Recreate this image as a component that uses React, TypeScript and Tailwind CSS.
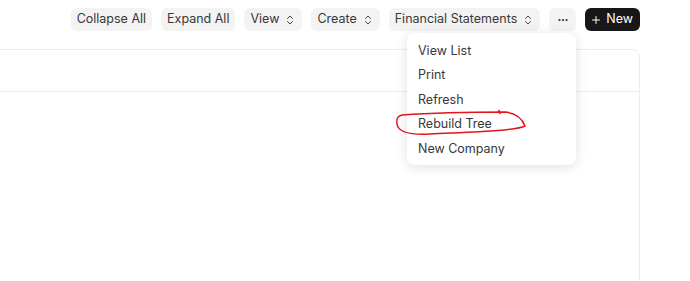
import { ChevronsUpDown, Ellipsis, Plus } from "lucide-react";

const font = { fontFamily: "Inter, 'Noto Sans', sans-serif" };

function ToolButton({ label, chevron }: { label: string; chevron?: boolean }) {
  return (
    <button className="flex h-[23px] items-center gap-[5px] rounded-md bg-[#f3f3f3] px-[6px] text-[12.5px] text-[#383838]">
      <span>{label}</span>
      {chevron && <ChevronsUpDown className="h-3 w-3 text-[#444]" strokeWidth={2} />}
    </button>
  );
}

const menuItems = ["View List", "Print", "Refresh", "Rebuild Tree", "New Company"];

export default function App() {
  return (
    <div className="relative h-[281px] w-[690px] overflow-hidden bg-white" style={font}>
      <div className="flex justify-end gap-[9px] pr-[50px] pt-2">
        <ToolButton label="Collapse All" />
        <ToolButton label="Expand All" />
        <ToolButton label="View" chevron />
        <ToolButton label="Create" chevron />
        <ToolButton label="Financial Statements" chevron />
        <button className="flex h-[23px] w-[27px] items-center justify-center rounded-md bg-[#f3f3f3] text-[#383838]">
          <Ellipsis className="h-3 w-3" strokeWidth={2.5} />
        </button>
        <button className="flex h-[23px] items-center gap-[4.5px] rounded-md bg-[#171717] pl-[4.5px] pr-[7px] text-[12.5px] text-white">
          <Plus className="h-3 w-3" strokeWidth={2} />
          <span>New</span>
        </button>
      </div>

      <div className="-ml-4 mr-[50px] mt-[18px] h-[260px] rounded-lg border border-[#ededed]">
        <div className="h-[42px] border-b border-[#ededed]" />
      </div>

      <div className="absolute left-[407px] top-[33px] w-[169px] rounded-lg bg-white pb-[3px] pt-[6px] shadow-[0_2px_12px_rgba(0,0,0,0.13)]">
        {menuItems.map((item) => (
          <div key={item} className="flex h-[24.5px] items-center px-[11px] text-[12.5px] text-[#383838]">
            {item}
          </div>
        ))}
      </div>

      <svg className="pointer-events-none absolute left-0 top-0" width="690" height="281">
        <path
          d="M499 110.5 L500 113.5 M402 115 C430 113 470 112 505 112 C515 113 522 118 525 126 C515 131 470 132 430 134 C410 135 398 132 397 124 C396 118 398 116 402 115"
          fill="none"
          stroke="#e4141c"
          strokeWidth="1.5"
          strokeLinecap="round"
          strokeLinejoin="round"
        />
      </svg>
    </div>
  );
}
